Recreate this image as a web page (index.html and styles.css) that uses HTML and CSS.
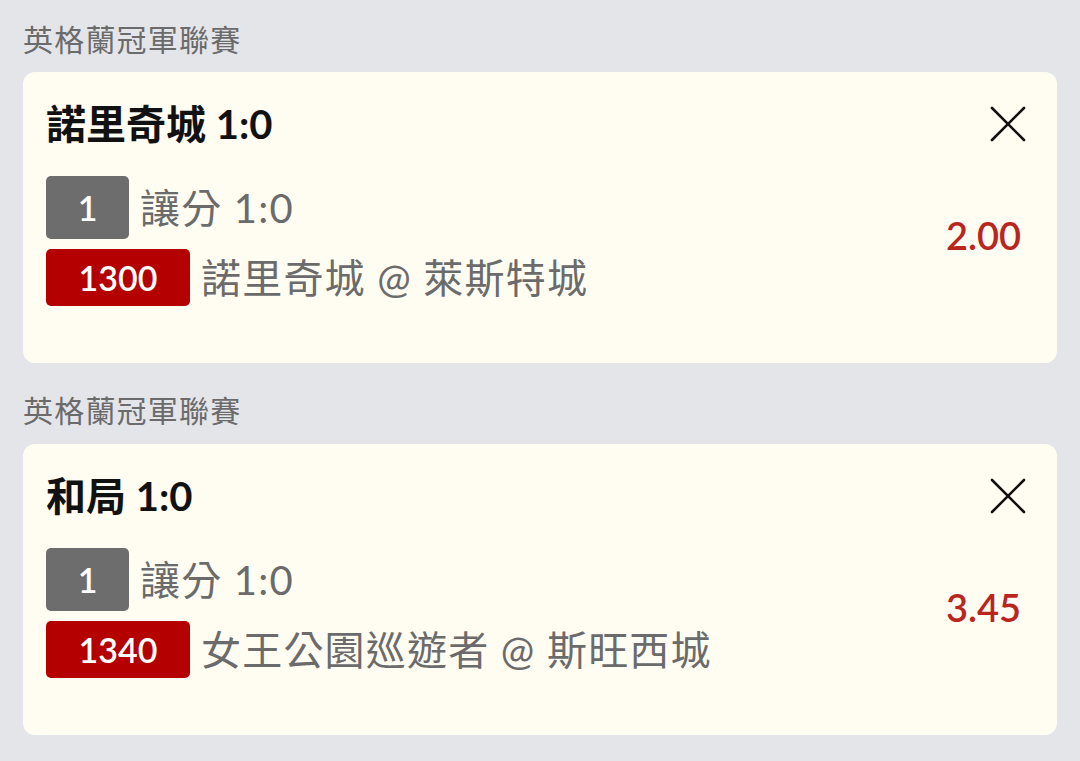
FILE: index.html
```html
<!DOCTYPE html>
<html lang="zh-Hant">
<head>
<meta charset="utf-8">
<link rel="stylesheet" href="styles.css">
</head>
<body>
<div class="list">
  <section class="bet">
    <div class="league">英格蘭冠軍聯賽</div>
    <div class="card">
      <div class="card-head">
        <div class="title">諾里奇城 1:0</div>
        <svg class="close" viewBox="0 0 36 36" width="36" height="36"><path d="M2 2 L34 34 M34 2 L2 34" stroke="#111" stroke-width="2.6" stroke-linecap="round" fill="none"/></svg>
      </div>
      <div class="card-body">
        <div class="rows">
          <div class="row">
            <span class="badge badge-grey">1</span>
            <span class="desc">讓分 1:0</span>
          </div>
          <div class="row">
            <span class="badge badge-red">1300</span>
            <span class="desc">諾里奇城 @ 萊斯特城</span>
          </div>
        </div>
        <div class="odds">2.00</div>
      </div>
    </div>
  </section>
  <section class="bet">
    <div class="league">英格蘭冠軍聯賽</div>
    <div class="card">
      <div class="card-head">
        <div class="title">和局 1:0</div>
        <svg class="close" viewBox="0 0 36 36" width="36" height="36"><path d="M2 2 L34 34 M34 2 L2 34" stroke="#111" stroke-width="2.6" stroke-linecap="round" fill="none"/></svg>
      </div>
      <div class="card-body">
        <div class="rows">
          <div class="row">
            <span class="badge badge-grey">1</span>
            <span class="desc">讓分 1:0</span>
          </div>
          <div class="row">
            <span class="badge badge-red">1340</span>
            <span class="desc">女王公園巡遊者 @ 斯旺西城</span>
          </div>
        </div>
        <div class="odds">3.45</div>
      </div>
    </div>
  </section>
</div>
</body>
</html>
```
FILE: styles.css
```css
html, body {
  margin: 0;
  padding: 0;
  background: #e4e5e9;
}
body {
  font-family: Lato, "Noto Sans CJK TC", sans-serif;
  width: 1080px;
  height: 761px;
  overflow: hidden;
}
.list {
  padding: 0 23px;
}
.bet {
  display: flex;
  flex-direction: column;
}
.league {
  padding-top: 20px;
  line-height: 38px;
  font-size: 30px;
  letter-spacing: 1.2px;
  color: #6b6b6b;
  margin-bottom: 14px;
}
.bet + .bet .league {
  padding-top: 28px;
  margin-bottom: 15px;
}
.card {
  background: #fffcf2;
  border-radius: 12px;
  padding: 29px 31px 57px 23px;
}
.card-head {
  display: flex;
  align-items: center;
  justify-content: space-between;
  height: 48px;
}
.title {
  font-size: 40px;
  font-weight: 700;
  color: #111;
  line-height: 48px;
  margin-top: -3px;
}
.close {
  display: block;
  margin-top: -2px;
}
.card-body {
  display: flex;
  align-items: center;
  justify-content: space-between;
  margin-top: 27px;
}
.rows {
  display: flex;
  flex-direction: column;
  gap: 10px;
}
.row {
  display: flex;
  align-items: center;
  gap: 11px;
}
.badge {
  display: flex;
  align-items: center;
  justify-content: center;
  color: #fff;
  border-radius: 5px;
  font-size: 34px;
  font-weight: 600;
}
.badge-grey {
  width: 83px;
  height: 63px;
  background: #6d6d6d;
}
.badge-red {
  width: 144px;
  height: 57px;
  background: #b50000;
}
.desc {
  font-size: 40px;
  letter-spacing: 1.2px;
  color: #6b6b6b;
  line-height: 48px;
}
.odds {
  font-size: 38px;
  font-weight: 600;
  color: #b8261e;
  margin-right: 5px;
  margin-bottom: 12px;
}
```
